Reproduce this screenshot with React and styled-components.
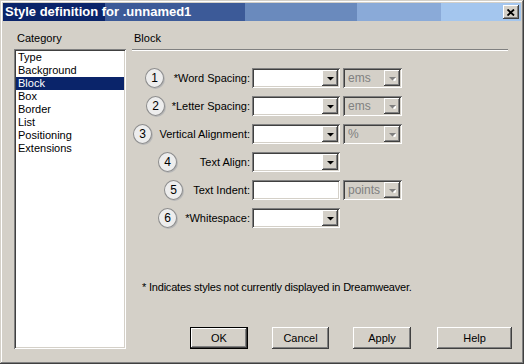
import React from "react";
import styled, { createGlobalStyle } from "styled-components";

const GlobalStyle = createGlobalStyle`
  body {
    margin: 0;
    background: #d4d0c8;
  }
`;

const raised = `
  box-shadow: inset -1px -1px #404040, inset 1px 1px #ffffff,
    inset -2px -2px #808080, inset 2px 2px #d4d0c8;
`;

const sunken = `
  box-shadow: inset 1px 1px #808080, inset -1px -1px #ffffff,
    inset 2px 2px #404040, inset -2px -2px #d4d0c8;
`;

const Window = styled.div`
  width: 524px;
  height: 364px;
  box-sizing: border-box;
  padding: 3px;
  background: #d4d0c8;
  box-shadow: inset -1px -1px #404040, inset 1px 1px #d4d0c8,
    inset -2px -2px #808080, inset 2px 2px #ffffff;
  display: flex;
  flex-direction: column;
  font-family: "Liberation Sans", Arial, sans-serif;
  font-size: 11px;
  color: #000;
`;

const TitleBar = styled.div`
  height: 18px;
  display: flex;
  align-items: center;
  justify-content: space-between;
  padding: 0 2px 0 2px;
  background: linear-gradient(
    to right,
    #0a246a 0 102px,
    #3c5a98 102px 242px,
    #6a8abd 242px 354px,
    #8aaad8 354px 438px,
    #a4c6ee 438px
  );
`;

const Title = styled.span`
  color: #fff;
  font-weight: bold;
  font-size: 13px;
  line-height: 18px;
  white-space: nowrap;
`;

const CloseButton = styled.div`
  width: 16px;
  height: 14px;
  background: #d4d0c8;
  ${raised}
  display: flex;
  align-items: center;
  justify-content: center;
`;

const Content = styled.div`
  flex: 1;
  display: flex;
  padding: 11px 0 0 11px;
`;

const Sidebar = styled.div`
  width: 112px;
  display: flex;
  flex-direction: column;
`;

const Caption = styled.div`
  height: 13px;
  line-height: 13px;
  padding-left: 3px;
  margin-bottom: 4px;
`;

const ListBox = styled.div`
  height: 300px;
  box-sizing: border-box;
  padding: 2px;
  background: #fff;
  ${sunken}
`;

const ListItem = styled.div`
  height: 13px;
  line-height: 13px;
  padding-left: 2px;
  background: ${(p) => (p.$selected ? "#0a246a" : "transparent")};
  color: ${(p) => (p.$selected ? "#fff" : "#000")};
`;

const Main = styled.div`
  width: 380px;
  margin-left: 6px;
  display: flex;
  flex-direction: column;
`;

const Heading = styled.div`
  height: 13px;
  line-height: 13px;
  padding-left: 2px;
`;

const Rule = styled.div`
  width: 376px;
  margin-top: 4px;
  border-top: 1px solid #808080;
  border-bottom: 1px solid #ffffff;
`;

const Form = styled.div`
  margin-top: 17px;
  display: grid;
  grid-template-columns: 118px 88px 60px;
  grid-auto-rows: 20px;
  column-gap: 2px;
  row-gap: 8px;
`;

const LabelCell = styled.div`
  display: flex;
  align-items: center;
  grid-column: 1;
`;

const Badge = styled.div`
  width: 19px;
  height: 20px;
  margin-left: ${(p) => p.$x}px;
  box-sizing: border-box;
  border-radius: 50%;
  background: #ededed;
  border: 1px solid #8c8c8c;
  box-shadow: 1px 1px 0 #b8b8b8;
  display: flex;
  align-items: center;
  justify-content: center;
  font-size: 12px;
`;

const LabelText = styled.span`
  margin-left: auto;
  white-space: nowrap;
`;

const Combo = styled.div`
  grid-column: ${(p) => p.$col};
  height: 20px;
  box-sizing: border-box;
  padding: 2px;
  display: flex;
  align-items: center;
  margin-left: ${(p) => (p.$col === 3 ? 1 : 0)}px;
  background: ${(p) => (p.$disabled ? "#d4d0c8" : "#ffffff")};
  ${sunken}
`;

const ComboText = styled.span`
  flex: 1;
  padding-left: 3px;
  color: #808080;
  font-size: 12px;
`;

const ArrowButton = styled.div`
  width: 16px;
  height: 16px;
  box-sizing: border-box;
  background: #d4d0c8;
  ${raised}
  display: flex;
  align-items: center;
  justify-content: center;
`;

const Note = styled.div`
  margin-top: 53px;
  padding-left: 10px;
  line-height: 13px;
  letter-spacing: -0.2px;
`;

const ButtonRow = styled.div`
  margin-top: 33px;
  display: flex;
  justify-content: flex-end;
  gap: 24px;
`;

const Button = styled.div`
  width: ${(p) => p.$w}px;
  height: 22px;
  box-sizing: border-box;
  margin-left: ${(p) => p.$extra || 0}px;
  background: #d4d0c8;
  display: flex;
  align-items: center;
  justify-content: center;
  ${(p) =>
    p.$default
      ? `box-shadow: inset 0 0 0 1px #000, inset -2px -2px #404040, inset 2px 2px #ffffff,
    inset -3px -3px #808080;`
      : raised}
`;

function Arrow({ disabled }) {
  return (
    <svg width="7" height="5" viewBox="0 0 7 5">
      {disabled && <path d="M2 2h7l-3.5 3.5z" fill="#fff" />}
      <path d="M0 1h7L3.5 4.5z" fill={disabled ? "#808080" : "#000"} />
    </svg>
  );
}

function Dropdown({ col, value, disabled }) {
  return (
    <Combo $col={col} $disabled={disabled}>
      <ComboText>{value}</ComboText>
      <ArrowButton>
        <Arrow disabled={disabled} />
      </ArrowButton>
    </Combo>
  );
}

const categories = [
  "Type",
  "Background",
  "Block",
  "Box",
  "Border",
  "List",
  "Positioning",
  "Extensions",
];

const rows = [
  { n: 1, x: 13, label: "*Word Spacing:", unit: "ems" },
  { n: 2, x: 14, label: "*Letter Spacing:", unit: "ems" },
  { n: 3, x: 1, label: "Vertical Alignment:", unit: "%" },
  { n: 4, x: 26, label: "Text Align:" },
  { n: 5, x: 32, label: "Text Indent:", unit: "points", input: true },
  { n: 6, x: 26, label: "*Whitespace:" },
];

export default function App() {
  return (
    <>
      <GlobalStyle />
      <Window>
        <TitleBar>
          <Title>Style definition for .unnamed1</Title>
          <CloseButton>
            <svg width="8" height="7" viewBox="0 0 8 7">
              <path
                d="M0.5 0.5L7 6.5M7 0.5L0.5 6.5"
                stroke="#000"
                strokeWidth="1.8"
              />
            </svg>
          </CloseButton>
        </TitleBar>
        <Content>
          <Sidebar>
            <Caption>Category</Caption>
            <ListBox>
              {categories.map((c) => (
                <ListItem key={c} $selected={c === "Block"}>
                  {c}
                </ListItem>
              ))}
            </ListBox>
          </Sidebar>
          <Main>
            <Heading>Block</Heading>
            <Rule />
            <Form>
              {rows.map((r) => (
                <React.Fragment key={r.n}>
                  <LabelCell>
                    <Badge $x={r.x}>{r.n}</Badge>
                    <LabelText>{r.label}</LabelText>
                  </LabelCell>
                  {r.input ? (
                    <Combo $col={2} />
                  ) : (
                    <Dropdown col={2} />
                  )}
                  {r.unit && <Dropdown col={3} value={r.unit} disabled />}
                </React.Fragment>
              ))}
            </Form>
            <Note>* Indicates styles not currently displayed in Dreamweaver.</Note>
            <ButtonRow>
              <Button $w={58} $default>
                OK
              </Button>
              <Button $w={57}>Cancel</Button>
              <Button $w={58}>Apply</Button>
              <Button $w={75} $extra={2}>
                Help
              </Button>
            </ButtonRow>
          </Main>
        </Content>
      </Window>
    </>
  );
}
